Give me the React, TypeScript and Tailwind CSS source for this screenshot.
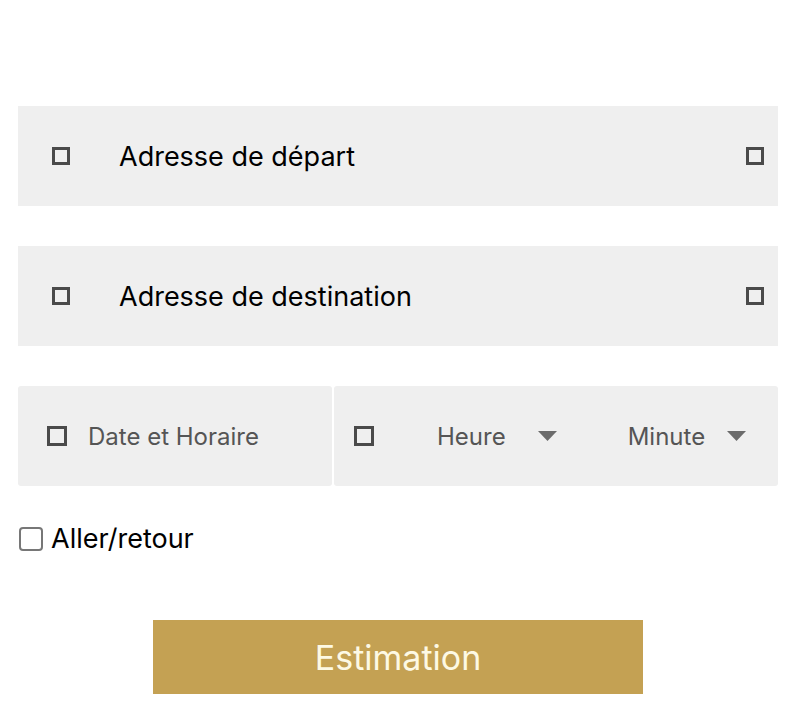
import type { ReactNode } from "react";

function Square({ size = 18 }: { size?: number }) {
  return (
    <span
      className="inline-block shrink-0 border-[3px] border-[#4a4a4a] bg-transparent"
      style={{ width: size, height: size }}
    />
  );
}

function Caret() {
  return (
    <svg width="19" height="10" viewBox="0 0 19 10" className="shrink-0">
      <path d="M0 0h19L9.5 10z" fill="#6b6b6b" />
    </svg>
  );
}

function Field({ children }: { children: ReactNode }) {
  return (
    <div className="flex h-[100px] items-center bg-[#efefef] pl-[34px] pr-[14px]">
      {children}
    </div>
  );
}

export default function App(): JSX.Element {
  return (
    <div
      className="min-h-[704px] w-[792px] bg-white pt-[106px] pl-[18px] pr-[14px]"
      style={{ fontFamily: "Inter, 'Noto Sans', sans-serif" }}
    >
      <div className="flex flex-col gap-[40px]">
        <Field>
          <Square />
          <span className="ml-[49px] flex-1 pt-[3px] text-[27px] text-black">Adresse de départ</span>
          <Square />
        </Field>
        <Field>
          <Square />
          <span className="ml-[49px] flex-1 pt-[3px] text-[27px] text-black">Adresse de destination</span>
          <Square />
        </Field>
        <div className="flex h-[100px] gap-[2px]">
          <div className="flex w-[314px] items-center rounded-[3px] bg-[#efefef] pl-[29px]">
            <Square size={20} />
            <span className="ml-[21px] pt-[2px] text-[24px] text-[#555]">Date et Horaire</span>
          </div>
          <div className="flex flex-1 items-center rounded-[3px] bg-[#efefef] pl-[20px]">
            <Square size={20} />
            <span className="ml-[63px] pt-[2px] text-[24px] text-[#555]">Heure</span>
            <span className="ml-[32px]">
              <Caret />
            </span>
            <span className="ml-[71px] pt-[2px] text-[24px] text-[#555]">Minute</span>
            <span className="ml-[22px]">
              <Caret />
            </span>
          </div>
        </div>
      </div>

      <label className="mt-[38px] flex items-center gap-[8px] leading-[30px]">
        <span className="ml-px inline-block h-[24px] w-[24px] rounded-[4px] border-2 border-[#777] bg-white" />
        <span className="text-[27px] text-black">Aller/retour</span>
      </label>

      <div className="mt-[66px] flex">
        <button className="ml-[135px] flex h-[74px] w-[490px] items-center justify-center bg-[#c4a153] text-[34px] text-[#fdf9e4]">
          Estimation
        </button>
      </div>
    </div>
  );
}
